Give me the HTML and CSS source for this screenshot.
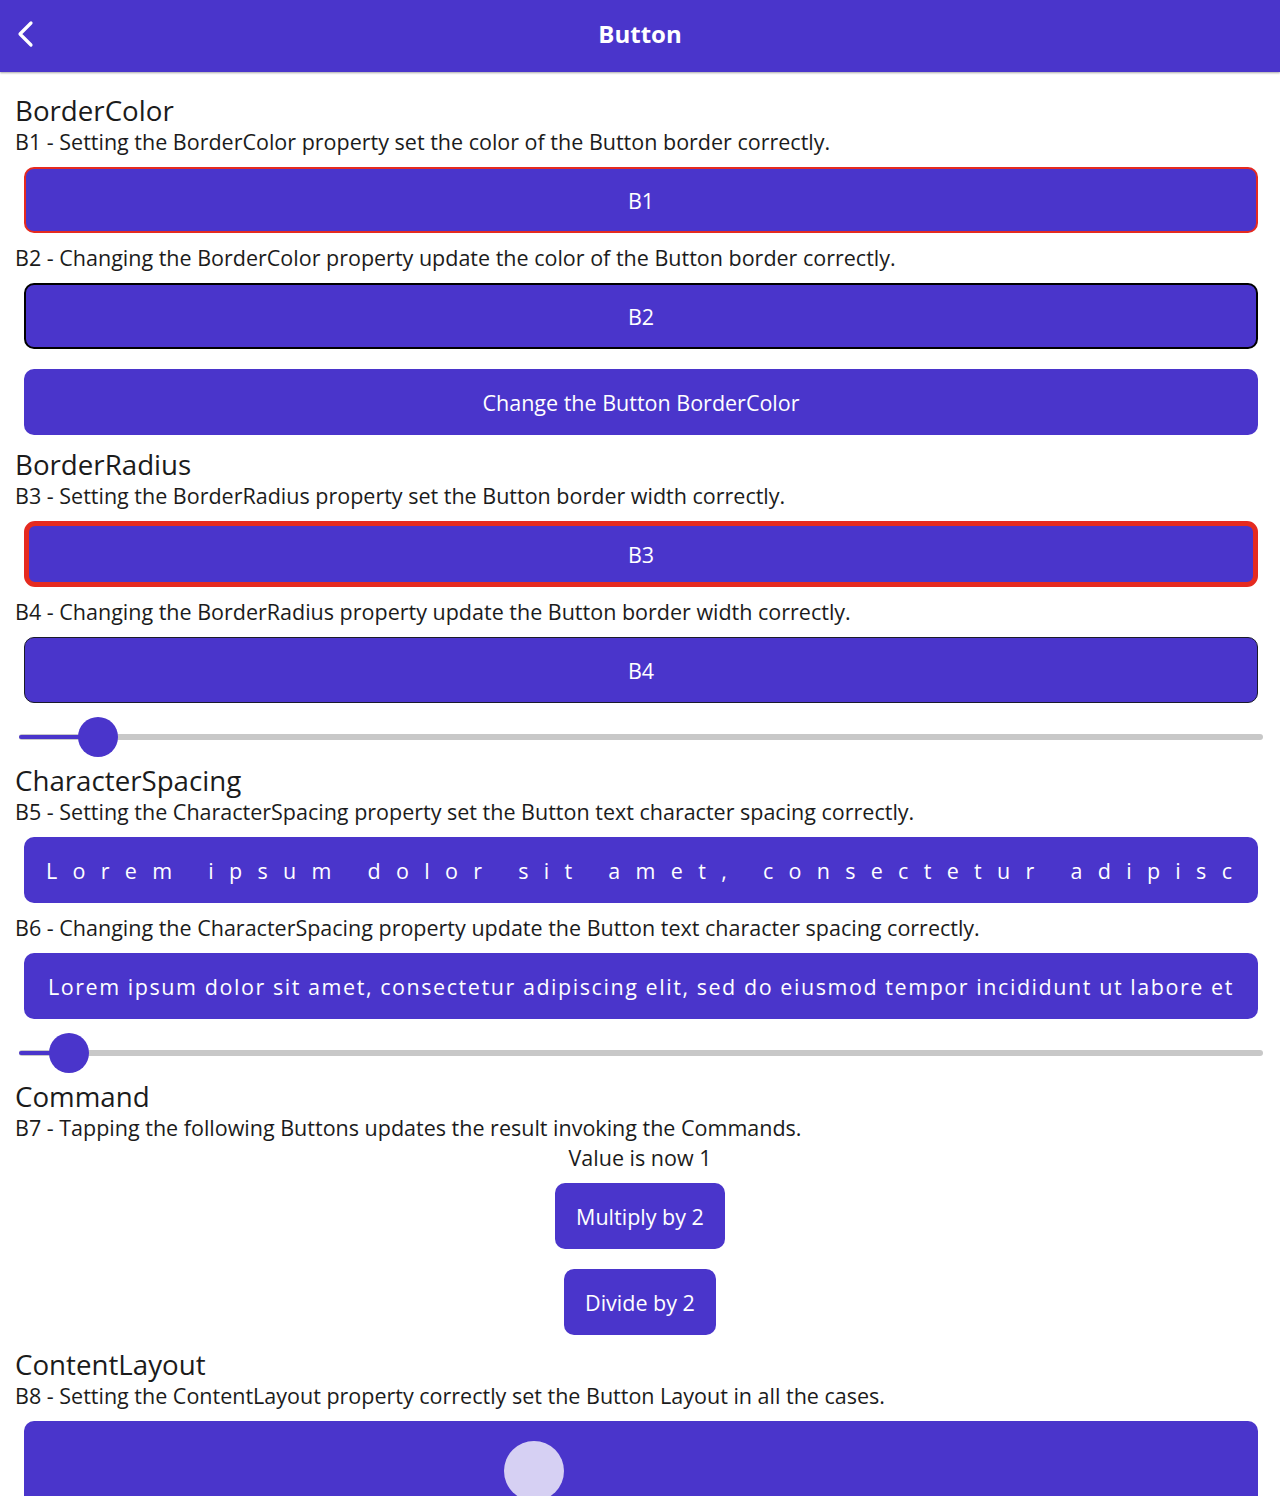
FILE: index.html
```html
<!DOCTYPE html>
<html>
<head>
<meta charset="utf-8">
<title>Button</title>
<link rel="stylesheet" href="styles.css">
</head>
<body>
<header class="topbar">
  <svg class="back" width="24" height="32" viewBox="0 0 24 32"><path d="M15 5 L4 16 L15 27" fill="none" stroke="#fff" stroke-width="3.2" stroke-linecap="round" stroke-linejoin="round"/></svg>
  <div class="title">Button</div>
</header>
<main class="content">
  <div class="heading">BorderColor</div>
  <div class="desc">B1 - Setting the BorderColor property set the color of the Button border correctly.</div>
  <div class="btn b-red">B1</div>
  <div class="desc">B2 - Changing the BorderColor property update the color of the Button border correctly.</div>
  <div class="btn b-black">B2</div>
  <div class="btn">Change the Button BorderColor</div>

  <div class="heading">BorderRadius</div>
  <div class="desc">B3 - Setting the BorderRadius property set the Button border width correctly.</div>
  <div class="btn b-thick">B3</div>
  <div class="desc">B4 - Changing the BorderRadius property update the Button border width correctly.</div>
  <div class="btn b-thin">B4</div>
  <div class="slider"><div class="track"></div><div class="fill" style="width:79px"></div><div class="thumb" style="left:59px"></div></div>

  <div class="heading">CharacterSpacing</div>
  <div class="desc">B5 - Setting the CharacterSpacing property set the Button text character spacing correctly.</div>
  <div class="btn spaced-wide">Lorem ipsum dolor sit amet, consectetur adipisc</div>
  <div class="desc">B6 - Changing the CharacterSpacing property update the Button text character spacing correctly.</div>
  <div class="btn spaced-narrow">Lorem ipsum dolor sit amet, consectetur adipiscing elit, sed do eiusmod tempor incididunt ut labore et</div>
  <div class="slider"><div class="track"></div><div class="fill" style="width:50px"></div><div class="thumb" style="left:30px"></div></div>

  <div class="heading">Command</div>
  <div class="desc">B7 - Tapping the following Buttons updates the result invoking the Commands.</div>
  <div class="value">Value is now 1</div>
  <div class="btn small">Multiply by 2</div>
  <div class="btn small">Divide by 2</div>

  <div class="heading">ContentLayout</div>
  <div class="desc">B8 - Setting the ContentLayout property correctly set the Button Layout in all the cases.</div>
  <div class="btn big"><div class="dot"></div></div>
</main>
</body>
</html>
```
FILE: styles.css
```css
html, body {
  margin: 0;
  padding: 0;
  background: #ffffff;
  font-family: "Open Sans", "Noto Sans", sans-serif;
  color: #1b1b1b;
  overflow: hidden;
}
.topbar {
  height: 72px;
  background: #4a35cb;
  display: flex;
  align-items: center;
  justify-content: center;
  position: relative;
  box-shadow: 0 1px 2px rgba(0,0,0,0.35);
}
.back {
  position: absolute;
  left: 16px;
  top: 18px;
}
.title {
  color: #fff;
  font-weight: 700;
  font-size: 24px;
  line-height: 32px;
  margin-top: -4px;
}
.content {
  display: flex;
  flex-direction: column;
  padding: 21px 0 0 15px;
}
.heading {
  font-size: 27.7px;
  line-height: 34px;
  margin-top: 2px;
}
.content > .heading:first-child {
  margin-top: 0;
}
.desc {
  font-size: 21.5px;
  line-height: 30px;
}
.btn {
  margin: 10px 22px 10px 9px;
  height: 66px;
  box-sizing: border-box;
  background: #4a35cb;
  border-radius: 10px;
  color: #fff;
  font-size: 21.5px;
  display: flex;
  align-items: center;
  justify-content: center;
  white-space: nowrap;
  overflow: hidden;
}
.b-red { border: 2px solid #e52a20; }
.b-black { border: 2px solid #000; }
.b-thick { border: 5px solid #e52a20; border-radius: 11px; }
.b-thin { border: 1px solid #1a1a2a; }
.spaced-wide {
  letter-spacing: 15.3px;
  justify-content: flex-start;
  padding-left: 22px;
}
.spaced-narrow { letter-spacing: 1.56px; }
.slider {
  position: relative;
  height: 28px;
  margin: 10px 17px 10px 4px;
}
.track {
  position: absolute;
  left: 0; right: 0; top: 11px;
  height: 6px;
  border-radius: 3px;
  background: #c8c8c8;
}
.fill {
  position: absolute;
  left: 0; top: 12px;
  height: 4px;
  border-radius: 2px;
  background: #4a35cb;
}
.thumb {
  position: absolute;
  top: -6px;
  width: 40px;
  height: 40px;
  border-radius: 50%;
  background: #4a35cb;
}
.value {
  font-size: 21.5px;
  line-height: 30px;
  text-align: center;
  margin-right: 15px;
}
.btn.small {
  align-self: center;
  margin-left: 0;
  margin-right: 15px;
  padding: 0 21px;
}
.btn.big {
  height: 120px;
  margin-bottom: 0;
  border-radius: 10px;
  display: block;
  position: relative;
}
.dot {
  position: absolute;
  left: 480px;
  top: 20px;
  width: 60px;
  height: 60px;
  border-radius: 50%;
  background: #d6d0f3;
}
```
